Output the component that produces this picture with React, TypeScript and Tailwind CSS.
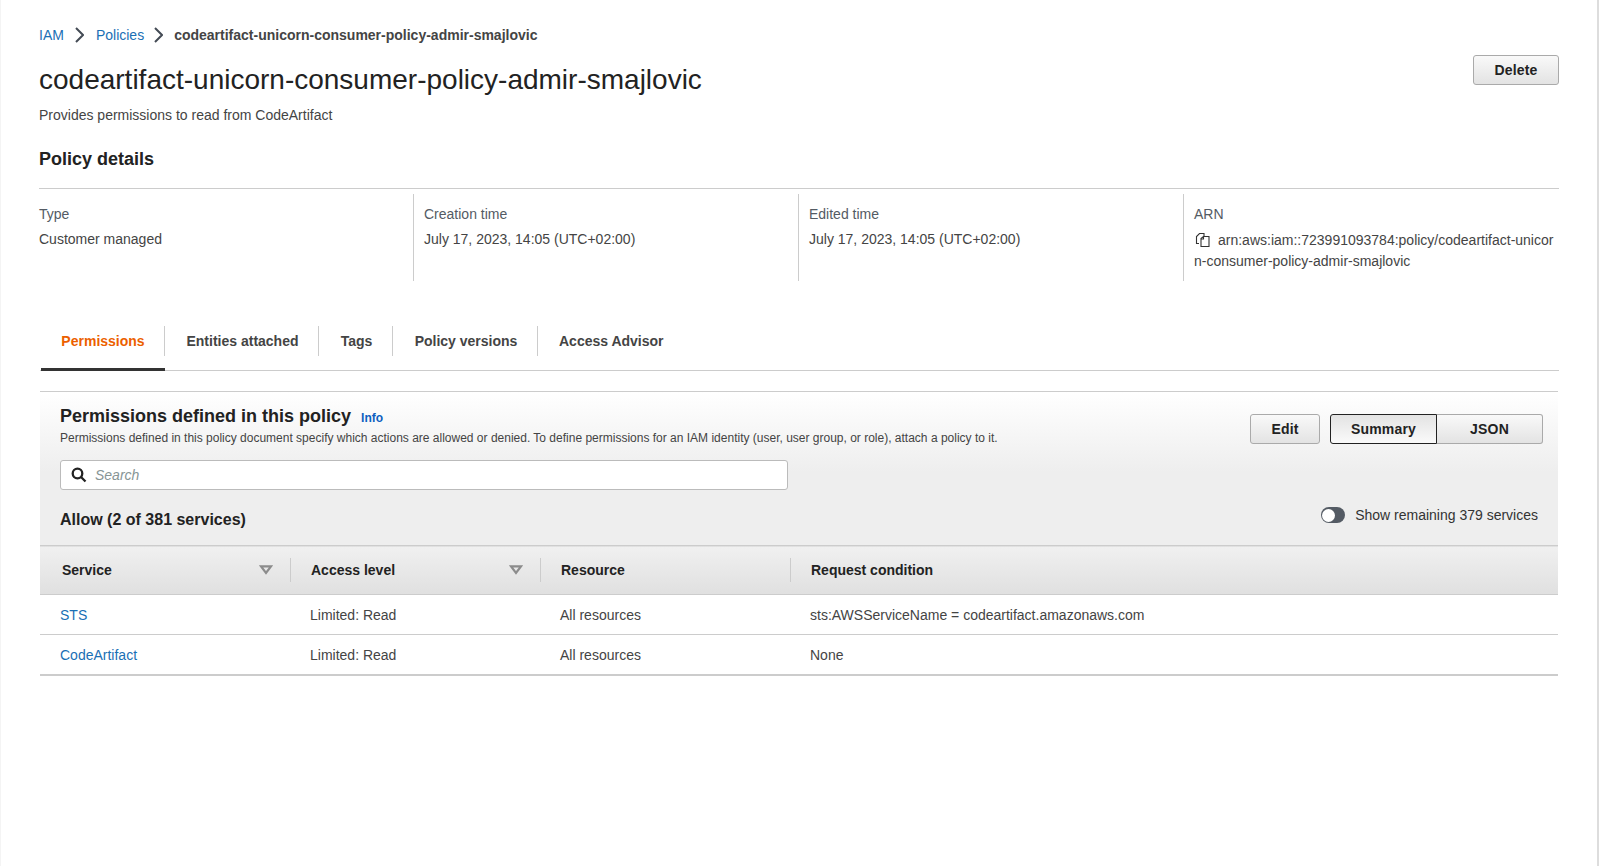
import React from 'react';

const sans = 'font-["Liberation_Sans",Arial,sans-serif]';

const Chevron = () => (
  <svg width="9" height="16" viewBox="0 0 9 16" fill="none" stroke="#444b55" strokeWidth="2" className="shrink-0">
    <path d="M1 1l7 7-7 7" />
  </svg>
);

const CopyIcon = () => (
  <svg width="16" height="16" viewBox="0 0 16 16" fill="none" stroke="#333" strokeWidth="1.1" className="shrink-0">
    <path d="M4 11.5H1.5V4.5L4.5 1.5H9V4" />
    <path d="M6 6.5L8.5 4.5H14V14.5H6V6.5Z" />
    <path d="M8.5 4.5V7H6" />
  </svg>
);

const SortIcon = () => (
  <svg width="14" height="10" viewBox="0 0 14 10" fill="none" stroke="#8c8c8c" strokeWidth="2.2" className="shrink-0">
    <path d="M2 1.3h10L7 8z" />
  </svg>
);

const SearchIcon = () => (
  <svg width="16" height="16" viewBox="0 0 16 16" fill="none" stroke="#222" strokeWidth="2.3" className="shrink-0">
    <circle cx="6.5" cy="6.5" r="4.8" />
    <path d="M10 10L14.5 14.5" />
  </svg>
);

const details = [
  { label: 'Creation time', value: 'July 17, 2023, 14:05 (UTC+02:00)' },
  { label: 'Edited time', value: 'July 17, 2023, 14:05 (UTC+02:00)' },
];

const tabs = [
  { name: 'Entities attached', width: 'w-[154px]' },
  { name: 'Tags', width: 'w-[74px]' },
  { name: 'Policy versions', width: 'w-[145px]' },
];

const rows = [
  { service: 'STS', access: 'Limited: Read', resource: 'All resources', condition: 'sts:AWSServiceName = codeartifact.amazonaws.com' },
  { service: 'CodeArtifact', access: 'Limited: Read', resource: 'All resources', condition: 'None' },
];

const btn = 'flex h-[30px] items-center justify-center border text-sm font-bold tracking-[0.2px] text-[#222]';
const btnIdle = 'border-[#aaa] bg-[linear-gradient(#f9f9f9,#e3e3e3)]';

export default function App() {
  return (
    <div className={`${sans} h-screen w-[1599px] overflow-hidden border-l border-r-2 border-l-[#f4f4f4] border-r-[#ddd] bg-white pl-[38px] pr-[38px] text-sm text-[#444]`}>
      <nav className="mt-[25px] flex h-[20px] items-center text-sm">
        <a className="text-[#1a6fb5]">IAM</a>
        <span className="ml-[11px] mr-[12px]"><Chevron /></span>
        <a className="text-[#1a6fb5]">Policies</a>
        <span className="ml-[10px] mr-[11px]"><Chevron /></span>
        <span className="font-bold text-[#444]">codeartifact-unicorn-consumer-policy-admir-smajlovic</span>
      </nav>

      <div className="mt-[10px] flex items-start justify-between">
        <h1 className="pt-[5px] text-[28px] leading-[40px] text-[#222]">codeartifact-unicorn-consumer-policy-admir-smajlovic</h1>
        <button className={`${btn} ${btnIdle} w-[86px] rounded-[3px]`}>Delete</button>
      </div>

      <p className="mt-[5px] h-5 leading-5">Provides permissions to read from CodeArtifact</p>
      <h2 className="mt-[22px] h-6 text-lg font-bold leading-6 text-[#222]">Policy details</h2>
      <div className="mt-[17px] h-px bg-[#ccc]" />

      <div className="mt-[5px] flex h-[87px]">
        <div className="w-[374px] pt-[10px] leading-5">
          <div className="text-[#545b64]">Type</div>
          <div className="mt-[5px]">Customer managed</div>
        </div>
        {details.map((d) => (
          <div key={d.label} className="w-[385px] border-l border-[#ccc] pl-[10px] pt-[10px] leading-5">
            <div className="text-[#545b64]">{d.label}</div>
            <div className="mt-[5px]">{d.value}</div>
          </div>
        ))}
        <div className="flex-1 border-l border-[#ccc] pl-[10px] pt-[10px] leading-5">
          <div className="text-[#545b64]">ARN</div>
          <div className="mt-[6px] break-all leading-[21px]">
            <span className="ml-[1px] mr-[7px] inline-block align-[-3px]"><CopyIcon /></span>
            arn:aws:iam::723991093784:policy/codeartifact-unicorn-consumer-policy-admir-smajlovic
          </div>
        </div>
      </div>

      <div className="ml-[1px] mt-[45px] flex h-[45px] items-start border-b border-[#ccc] font-bold text-[#444]">
        <div className="w-[125px]">
          <div className="flex h-[30px] items-center justify-center border-r border-[#ccc] pl-[2px] text-[#ec5f00]">Permissions</div>
          <div className="ml-[1px] mt-[12px] h-[3px] bg-[#333]" />
        </div>
        {tabs.map((t) => (
          <div key={t.name} className={`flex h-[30px] ${t.width} items-center justify-center border-r border-[#ccc] pl-[2px]`}>{t.name}</div>
        ))}
        <div className="flex h-[30px] items-center pl-[21px]">Access Advisor</div>
      </div>

      <section className="ml-[1px] mr-px mt-[20px] border-t border-[#ccc]">
        <div className="bg-[linear-gradient(#fff,#eee_80px)]">
          <div className="flex justify-between pl-[20px] pr-[15px]">
            <div>
              <div className="mt-[12px] flex h-6 items-baseline">
                <h3 className="text-lg font-bold leading-6 text-[#222]">Permissions defined in this policy</h3>
                <a className="ml-[10px] text-xs font-bold text-[#0d5fc0]">Info</a>
              </div>
              <p className="mt-[2px] h-4 text-xs leading-4 text-[#444]">
                Permissions defined in this policy document specify which actions are allowed or denied. To define permissions for an IAM identity (user, user group, or role), attach a policy to it.
              </p>
            </div>
            <div className="flex pt-[22px]">
              <button className={`${btn} ${btnIdle} w-[70px] rounded-[3px]`}>Edit</button>
              <button className={`${btn} ml-[10px] w-[107px] rounded-l-[3px] border-[#222] bg-[linear-gradient(#e3e3e3,#fafafa)]`}>Summary</button>
              <button className={`${btn} ${btnIdle} w-[106px] rounded-r-[3px] border-l-0`}>JSON</button>
            </div>
          </div>

          <div className="ml-[20px] mt-[14px] flex h-[30px] w-[728px] items-center gap-[8px] rounded-[3px] border border-[#bbb] bg-white pl-[10px]">
            <SearchIcon />
            <span className="italic text-[#879596]">Search</span>
          </div>

          <div className="mt-[17px] flex h-[38px] items-start justify-between pl-[20px] pr-[20px]">
            <div className="pt-[1px] text-base font-bold leading-6 text-[#222]">Allow (2 of 381 services)</div>
            <div className="flex h-4 items-center gap-[10px]">
              <div className="flex h-4 w-6 items-center rounded-full bg-[#545b64] pl-[1px]">
                <div className="h-[13px] w-[13px] rounded-full bg-white" />
              </div>
              <span className="text-[#333]">Show remaining 379 services</span>
            </div>
          </div>
        </div>

        <table className="w-full table-fixed border-collapse">
          <thead>
            <tr className="h-[49px] border-y border-[#ccc] bg-[linear-gradient(#f0f0f0,#e0e0e0)] text-left font-bold text-[#222]">
              <th className="w-[250px] pl-[22px] pr-[17px]">
                <div className="flex items-center justify-between"><span>Service</span><SortIcon /></div>
              </th>
              <th className="w-[250px]">
                <div className="flex h-6 items-center justify-between border-l border-[#ccc] pl-[20px] pr-[17px]"><span>Access level</span><SortIcon /></div>
              </th>
              <th className="w-[250px]">
                <div className="flex h-6 items-center border-l border-[#ccc] pl-[20px]">Resource</div>
              </th>
              <th>
                <div className="flex h-6 items-center border-l border-[#ccc] pl-[20px]">Request condition</div>
              </th>
            </tr>
          </thead>
          <tbody>
            {rows.map((r, i) => (
              <tr key={r.service} className={`h-[40px] ${i === rows.length - 1 ? 'border-b-2 border-[#ccc]' : 'border-b border-[#ccc]'}`}>
                <td className={`pl-[20px] text-[#1a6fb5] ${i === 1 ? 'pt-[1px]' : ''}`}>{r.service}</td>
                <td className={`pl-[20px] ${i === 1 ? 'pt-[1px]' : ''}`}>{r.access}</td>
                <td className={`pl-[20px] ${i === 1 ? 'pt-[1px]' : ''}`}>{r.resource}</td>
                <td className={`pl-[20px] ${i === 1 ? 'pt-[1px]' : ''}`}>{r.condition}</td>
              </tr>
            ))}
          </tbody>
        </table>
      </section>
    </div>
  );
}
